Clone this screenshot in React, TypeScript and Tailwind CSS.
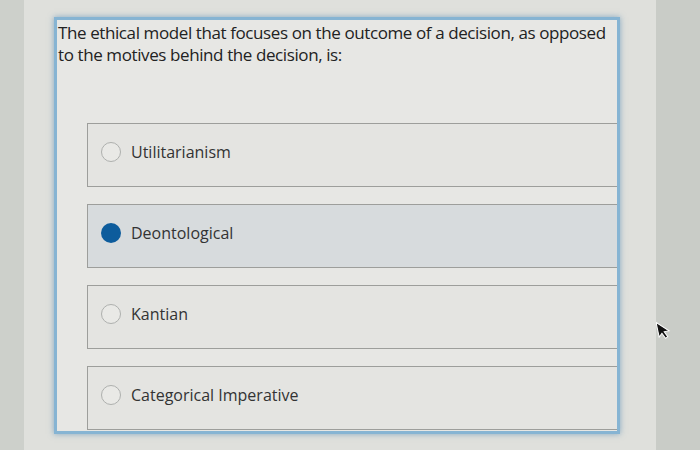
const options = [
  { label: 'Utilitarianism', selected: false },
  { label: 'Deontological', selected: true },
  { label: 'Kantian', selected: false },
  { label: 'Categorical Imperative', selected: false },
];

function Radio({ checked }: { checked: boolean }) {
  if (checked) {
    return <span className="w-[20px] h-[20px] rounded-full bg-[#0d5c9c] shrink-0" />;
  }
  return <span className="w-[20px] h-[20px] rounded-full border border-[#aeb0ae] bg-[#e9e9e6] shrink-0" />;
}

export default function App() {
  return (
    <div
      className="relative w-[700px] h-[450px] flex bg-[#dfe0dc] overflow-hidden"
      style={{ fontFamily: '"Open Sans", "Liberation Sans", sans-serif' }}
    >
      <div className="w-[24px] bg-[#cdd0cb]" />
      <div className="flex-1 pt-[17px] pl-[30px] pr-[36px]">
        <div className="h-[417px] border-[3px] border-[#86b4d3] bg-[#e7e7e4] shadow-[0_0_6px_rgba(60,120,170,0.55)] flex flex-col overflow-hidden">
          <p className="pt-[2px] pl-[1px] text-[17px] leading-[22px] text-[#222222] tracking-[-0.4px] whitespace-nowrap">
            The ethical model that focuses on the outcome of a decision, as opposed
            <br />
            to the motives behind the decision, is:
          </p>
          <div className="mt-[57px] ml-[30px] flex flex-col gap-[17px]">
            {options.map((o) => (
              <div
                key={o.label}
                className={`h-[64px] border border-r-0 border-[#9d9e9b] pl-[13px] pt-[16px] ${
                  o.selected ? 'bg-[#d7dbdd]' : 'bg-[#e4e4e1]'
                }`}
              >
                <div className="flex items-center gap-[10px]">
                  <Radio checked={o.selected} />
                  <span className="text-[16px] text-[#333333]">{o.label}</span>
                </div>
              </div>
            ))}
          </div>
        </div>
      </div>
      <div className="w-[44px] bg-[#c9ccc7]" />
      <svg
        className="absolute left-[656px] top-[320px]"
        width="16"
        height="22"
        viewBox="0 0 16 22"
      >
        <path
          d="M2 1 L2 16 L5.5 12.8 L8 18.5 L10.5 17.4 L8 11.8 L13 11.8 Z"
          fill="#111"
          stroke="#fff"
          strokeWidth="1"
          transform="rotate(-12 8 11)"
        />
      </svg>
    </div>
  );
}
